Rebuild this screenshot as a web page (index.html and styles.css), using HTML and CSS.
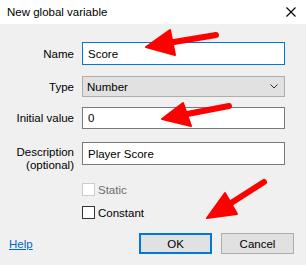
FILE: index.html
```html
<!DOCTYPE html>
<html lang="en">
<head>
  <meta charset="UTF-8">
  <title>New global variable</title>
  <link rel="stylesheet" href="styles.css">
</head>
<body>
  <div class="dialog">
    <div class="titlebar">
      <span class="title">New global variable</span>
      <svg class="close" width="10" height="10" viewBox="0 0 10 10">
        <path d="M0.5 0.5 L9.5 9.5 M9.5 0.5 L0.5 9.5" stroke="#000" stroke-width="1.1" fill="none"/>
      </svg>
    </div>

    <div class="content">
      <div class="row row-name">
        <label class="label">Name</label>
        <div class="field focused">Score</div>
      </div>
      <div class="row row-type">
        <label class="label">Type</label>
        <div class="field select">
          <span>Number</span>
          <svg width="8" height="5" viewBox="0 0 8 5">
            <path d="M0.5 0.5 L4 4 L7.5 0.5" stroke="#333" stroke-width="1" fill="none"/>
          </svg>
        </div>
      </div>
      <div class="row row-init">
        <label class="label">Initial value</label>
        <div class="field">0</div>
      </div>
      <div class="row row-desc">
        <label class="label two-line">Description<br>(optional)</label>
        <div class="field">Player Score</div>
      </div>

      <div class="check disabled">
        <span class="box"></span>
        <span>Static</span>
      </div>
      <div class="check">
        <span class="box"></span>
        <span>Constant</span>
      </div>

      <div class="footer">
        <a href="#" class="help">Help</a>
        <div class="buttons">
          <button class="btn default">OK</button>
          <button class="btn">Cancel</button>
        </div>
      </div>
    </div>

    <!-- red annotation arrows drawn over the dialog -->
    <svg class="arrows" width="306" height="265" viewBox="0 0 306 265">
      <g fill="#f00" stroke="#f00" stroke-linecap="round" stroke-linejoin="round">
        <line x1="216" y1="35" x2="168" y2="43" stroke-width="6"/>
        <polygon points="146,47 170,30 175,55" stroke-width="2"/>
        <line x1="229" y1="106" x2="182" y2="115" stroke-width="6"/>
        <polygon points="162,119 183,103 191,126" stroke-width="2"/>
        <line x1="264" y1="182" x2="228" y2="205" stroke-width="6"/>
        <polygon points="207,218 225,193 237,214" stroke-width="2"/>
      </g>
    </svg>
  </div>
</body>
</html>
```

FILE: styles.css
```css
body {
  margin: 0;
  padding: 0;
  font-family: "Liberation Sans", Arial, sans-serif;
  font-size: 11.5px;
  color: #000;
  background-color: #f0f0f0;
}

.dialog {
  position: relative;
  width: 306px;
  height: 265px;
  overflow: hidden;
  background-color: #f0f0f0;
}

.titlebar {
  height: 24px;
  background-color: #fff;
  display: flex;
  align-items: center;
  justify-content: space-between;
  padding: 0 10px 0 7px;
}

.title {
  font-size: 11.5px;
}

.content {
  padding-top: 18px;
}

.row {
  display: flex;
  align-items: center;
  gap: 8px;
}

.label {
  width: 74px;
  text-align: right;
}

.field {
  box-sizing: border-box;
  width: 203px;
  height: 22px;
  padding: 0 5px;
  display: flex;
  align-items: center;
  background-color: #fff;
  border: 1px solid #7a7a7a;
}

.focused {
  height: 23px;
  border-color: #0078d7;
}

.select {
  height: 21px;
  padding: 0 6px 0 4px;
  justify-content: space-between;
  background-color: #e1e1e1;
  border-color: #adadad;
}

.row-type { margin-top: 11px; }
.row-init { margin-top: 10px; }

.row-desc {
  margin-top: 13px;
  align-items: flex-start;
}

.row-desc .field { height: 23px; }

.two-line {
  line-height: 13px;
  padding-top: 4px;
}

.check {
  display: flex;
  align-items: center;
  gap: 3px;
  margin-left: 82px;
  height: 13px;
}

.check.disabled {
  margin-top: 11px;
  color: #6d6d6d;
}

.check + .check { margin-top: 10px; }

.box {
  box-sizing: border-box;
  width: 13px;
  height: 13px;
  background-color: #fff;
  border: 1px solid #333;
}

.disabled .box { border-color: #ccc; }

.footer {
  display: flex;
  justify-content: space-between;
  align-items: center;
  margin-top: 14px;
  padding: 0 12px 0 9px;
}

.help {
  color: #0066cc;
  text-decoration: underline;
}

.buttons {
  display: flex;
  gap: 9px;
}

.btn {
  box-sizing: border-box;
  width: 73px;
  height: 21px;
  padding: 0;
  font-family: inherit;
  font-size: 11.5px;
  color: #000;
  background-color: #e1e1e1;
  border: 1px solid #adadad;
}

.btn.default { border: 2px solid #0078d7; }

.arrows {
  position: absolute;
  left: 0;
  top: 0;
  pointer-events: none;
}
```
